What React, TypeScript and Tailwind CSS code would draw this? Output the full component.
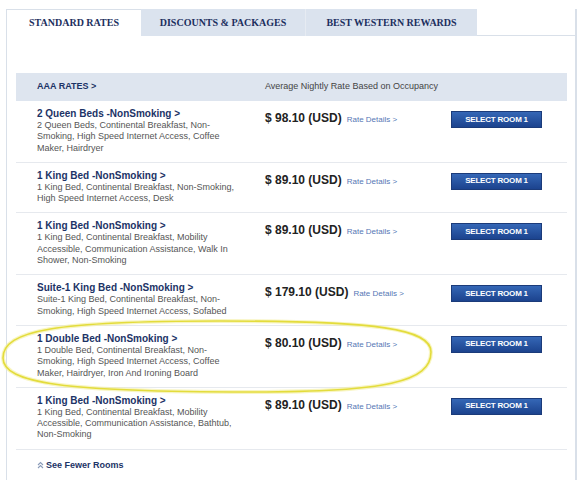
const rooms = [
  {
    title: "2 Queen Beds -NonSmoking >",
    lines: [
      "2 Queen Beds, Continental Breakfast, Non-",
      "Smoking, High Speed Internet Access, Coffee",
      "Maker, Hairdryer",
    ],
    price: "$ 98.10 (USD)",
  },
  {
    title: "1 King Bed -NonSmoking >",
    lines: [
      "1 King Bed, Continental Breakfast, Non-Smoking,",
      "High Speed Internet Access, Desk",
    ],
    price: "$ 89.10 (USD)",
  },
  {
    title: "1 King Bed -NonSmoking >",
    lines: [
      "1 King Bed, Continental Breakfast, Mobility",
      "Accessible, Communication Assistance, Walk In",
      "Shower, Non-Smoking",
    ],
    price: "$ 89.10 (USD)",
  },
  {
    title: "Suite-1 King Bed -NonSmoking >",
    lines: [
      "Suite-1 King Bed, Continental Breakfast, Non-",
      "Smoking, High Speed Internet Access, Sofabed",
    ],
    price: "$ 179.10 (USD)",
  },
  {
    title: "1 Double Bed -NonSmoking >",
    lines: [
      "1 Double Bed, Continental Breakfast, Non-",
      "Smoking, High Speed Internet Access, Coffee",
      "Maker, Hairdryer, Iron And Ironing Board",
    ],
    price: "$ 80.10 (USD)",
  },
  {
    title: "1 King Bed -NonSmoking >",
    lines: [
      "1 King Bed, Continental Breakfast, Mobility",
      "Accessible, Communication Assistance, Bathtub,",
      "Non-Smoking",
    ],
    price: "$ 89.10 (USD)",
  },
];

// hand drawn highlight round the double bed row
const circle =
  "M3 358 C3 330 57 321 220 321 C378 321 431 329 431 352 C431 382 386 392 250 392 C65 392 3 383.5 3 358 Z";

export default function App() {
  return (
    <div className="relative h-[480px] w-[586px] overflow-hidden bg-white font-['Liberation_Sans',Arial,sans-serif]">
      <div className="pl-[6px] pt-[9px]">
        {/* tabs */}
        <div className="flex h-[27px] w-[571px] font-['Liberation_Serif','Times_New_Roman',serif] text-[10px] font-bold text-[#1c2f5e]">
          <div className="flex w-[135px] items-center justify-center border-l border-t border-[#d9e0e9] bg-white pb-[1px]">
            STANDARD RATES
          </div>
          <div className="flex w-[164px] items-center justify-center bg-[#dbe3ee] pb-[1px]">
            DISCOUNTS &amp; PACKAGES
          </div>
          <div className="flex w-[172px] items-center justify-center border-l border-[#e6ebf2] bg-[#dbe3ee] pb-[1px]">
            BEST WESTERN REWARDS
          </div>
          <div className="flex-1 border-b border-r-2 border-[#d9e0e9]" />
        </div>

        {/* content box */}
        <div className="h-[444px] w-[571px] border-l border-r-2 border-[#d9e0e9] pl-[9px] pr-[8px] pt-[37px]">
          <div className="flex h-[28px] items-center bg-[#dee5ef] text-[9px]">
            <div className="w-[249px] pl-[21px] font-bold text-[#1c3366]">AAA RATES &gt;</div>
            <div className="text-[#444]">Average Nightly Rate Based on Occupancy</div>
          </div>

          {rooms.map((room, i) => (
            <div key={i} className="flex border-b border-[#e6e9ee] pb-[8px] pt-[7px]">
              <div className="w-[249px] pl-[21px]">
                <div className="text-[10px] font-bold leading-[12px] text-[#1c3366]">{room.title}</div>
                {room.lines.map((line, j) => (
                  <div key={j} className="text-[9px] leading-[11.3px] text-[#555]">
                    {line}
                  </div>
                ))}
              </div>
              <div className="mt-[3px] flex w-[186px] items-baseline">
                <span className="text-[12px] font-bold leading-[14px] text-[#222]">{room.price}</span>
                <span className="ml-[5px] text-[8px] text-[#5577b5]">Rate Details &gt;</span>
              </div>
              <button
                type="button"
                className="mt-[3px] flex h-[17px] w-[91px] items-center justify-center border border-[#1b3b7a] bg-gradient-to-b from-[#3567b6] to-[#1c438e] text-[8px] font-bold tracking-[-0.2px] text-white"
              >
                SELECT ROOM 1
              </button>
            </div>
          ))}

          <div className="flex items-center pl-[21px] pt-[10px]">
            <svg width="7" height="8" viewBox="0 0 7 8" className="mr-[2px]">
              <path d="M1 4 L3.5 1.5 L6 4 M1 7 L3.5 4.5 L6 7" fill="none" stroke="#8a9bb8" strokeWidth="1.1" />
            </svg>
            <span className="text-[9px] font-bold leading-[10px] text-[#1c3366]">See Fewer Rooms</span>
          </div>
        </div>
      </div>

      {/* yellow annotation */}
      <svg className="pointer-events-none absolute left-0 top-0" width="586" height="480" viewBox="0 0 586 480">
        <path d={circle} fill="none" stroke="#f3ef9a" strokeWidth="4" opacity="0.6" />
        <path d={circle} fill="none" stroke="#e3dc3c" strokeWidth="1.6" />
      </svg>
    </div>
  );
}
